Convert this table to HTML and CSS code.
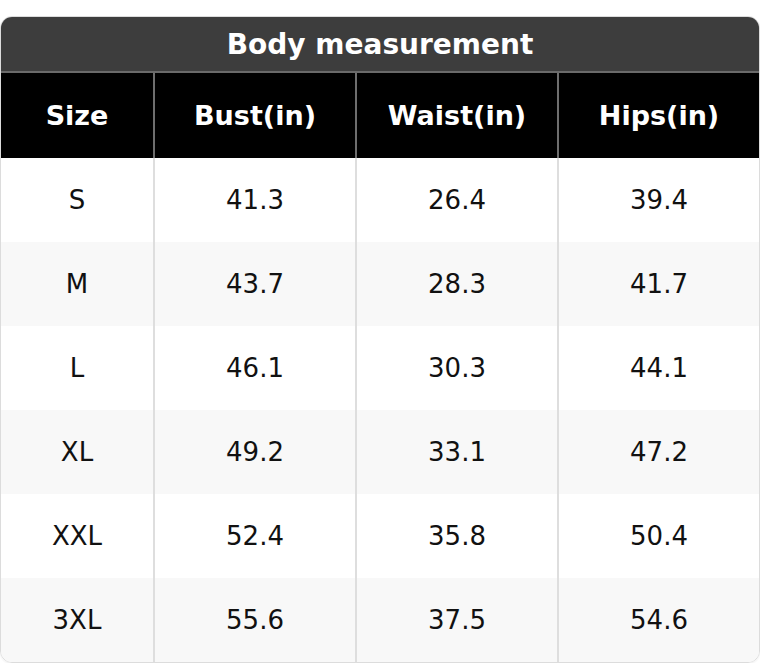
FILE: index.html
```html
<!DOCTYPE html>
<html>
<head>
<meta charset="utf-8">
<link rel="stylesheet" href="styles.css">
</head>
<body>
<div class="card">
  <div class="title">Body measurement</div>
  <div class="row head">
    <div class="cell">Size</div>
    <div class="cell">Bust(in)</div>
    <div class="cell">Waist(in)</div>
    <div class="cell">Hips(in)</div>
  </div>
  <div class="body">
    <div class="row"><div class="cell">S</div><div class="cell">41.3</div><div class="cell">26.4</div><div class="cell">39.4</div></div>
    <div class="row"><div class="cell">M</div><div class="cell">43.7</div><div class="cell">28.3</div><div class="cell">41.7</div></div>
    <div class="row"><div class="cell">L</div><div class="cell">46.1</div><div class="cell">30.3</div><div class="cell">44.1</div></div>
    <div class="row"><div class="cell">XL</div><div class="cell">49.2</div><div class="cell">33.1</div><div class="cell">47.2</div></div>
    <div class="row"><div class="cell">XXL</div><div class="cell">52.4</div><div class="cell">35.8</div><div class="cell">50.4</div></div>
    <div class="row"><div class="cell">3XL</div><div class="cell">55.6</div><div class="cell">37.5</div><div class="cell">54.6</div></div>
  </div>
</div>
</body>
</html>
```
FILE: styles.css
```css
html, body {
  margin: 0;
  padding: 0;
  background: #ffffff;
}
body {
  font-family: "DejaVu Sans", "Liberation Sans", sans-serif;
}
.card {
  margin-top: 16px;
  border: 1px solid #dcdcdc;
  border-radius: 12px;
  overflow: hidden;
  box-shadow: 0 1px 2px rgba(0,0,0,0.06);
}
.title {
  height: 54px;
  background: #3d3d3d;
  color: #ffffff;
  font-size: 28px;
  font-weight: bold;
  display: flex;
  align-items: center;
  justify-content: center;
  border-bottom: 2px solid #6a6a6a;
}
.row {
  display: grid;
  grid-template-columns: 152px 1fr 1fr 1fr;
  height: 84px;
}
.cell {
  display: flex;
  align-items: center;
  justify-content: center;
}
.cell + .cell {
  border-left: 2px solid #dedede;
}
.head {
  height: 85px;
  background: #000000;
  color: #ffffff;
  font-size: 27px;
  font-weight: bold;
}
.head .cell + .cell {
  border-left-color: #6e6e6e;
}
.body .row {
  font-size: 26px;
  color: #111111;
  background: #ffffff;
}
.body .row:nth-child(even) {
  background: #f8f8f8;
}
```
